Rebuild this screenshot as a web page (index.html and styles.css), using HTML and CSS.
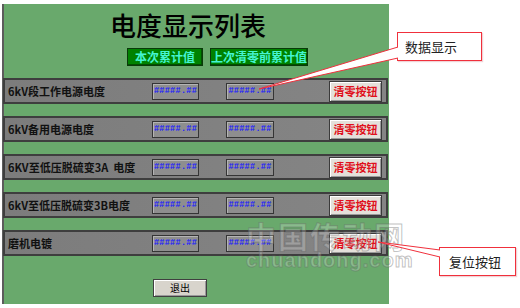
FILE: index.html
```html
<!DOCTYPE html>
<html lang="zh-CN">
<head>
    <meta charset="UTF-8">
    <title>电度显示列表</title>
    <link rel="stylesheet" href="styles.css">
</head>
<body>

    <div class="screen">
        <h1 class="title">电度显示列表</h1>

        <div class="heads">
            <span class="head head-now">本次累计值</span>
            <span class="head head-last">上次清零前累计值</span>
        </div>

        <ul class="rows">
            <li class="row">
                <span class="name">6kV段工作电源电度</span>
                <span class="val">#####.##</span>
                <span class="val val-last">#####.##</span>
                <button class="clear">清零按钮</button>
            </li>
            <li class="row">
                <span class="name">6kV备用电源电度</span>
                <span class="val">#####.##</span>
                <span class="val val-last">#####.##</span>
                <button class="clear">清零按钮</button>
            </li>
            <li class="row">
                <span class="name">6KV至低压脱硫变3A&nbsp;&nbsp;电度</span>
                <span class="val">#####.##</span>
                <span class="val val-last">#####.##</span>
                <button class="clear">清零按钮</button>
            </li>
            <li class="row">
                <span class="name">6kV至低压脱硫变3B电度</span>
                <span class="val">#####.##</span>
                <span class="val val-last">#####.##</span>
                <button class="clear">清零按钮</button>
            </li>
            <li class="row">
                <span class="name">磨机电镀</span>
                <span class="val">#####.##</span>
                <span class="val val-last">#####.##</span>
                <button class="clear">清零按钮</button>
            </li>
        </ul>

        <button class="exit">退出</button>
    </div>

    <!-- watermark over the lower rows -->
    <div class="watermark">
        <div class="wm-cn">中国传动网</div>
        <div class="wm-en">chuandong.com</div>
    </div>

    <!-- annotations -->
    <div class="callout callout-data">数据显示</div>
    <div class="callout callout-reset">复位按钮</div>
    <svg class="pointers" width="520" height="308" viewBox="0 0 520 308">
        <polygon points="398,47 259,89 398,58" fill="#fff"/>
        <polyline points="398,47 259,89 398,58" fill="none" stroke="#f0303c" stroke-width="1"/>
        <polygon points="440,250 378,242 440,257" fill="#fff"/>
        <polyline points="440,250 378,242 440,257" fill="none" stroke="#f0303c" stroke-width="1"/>
    </svg>

</body>
</html>
```

FILE: styles.css
```css
body {
    margin: 0;
    width: 520px;
    height: 308px;
    overflow: hidden;
    position: relative;
    background-color: #ffffff;
    font-family: "Noto Sans CJK SC", "Liberation Sans", sans-serif;
}

.screen {
    margin: 4px 0 0 2px;
    width: 385px;
    height: 300px;
    background-color: #69a96c;
    border-left: 2px solid #5c5c5c;
    display: flex;
    flex-direction: column;
}

.title {
    margin: 6px 0 0 0;
    padding-left: 106px;
    font-size: 26px;
    line-height: 30px;
    font-weight: 500;
    color: #000000;
}

.heads {
    display: flex;
    gap: 7px;
    margin-top: 8px;
    padding-left: 123px;
}

.head {
    box-sizing: border-box;
    height: 18px;
    background-color: #008200;
    border: 1px solid #0a3a0a;
    box-shadow: inset -1px -1px 0 #005000;
    color: #45f5d2;
    font-size: 12px;
    font-weight: bold;
    line-height: 16px;
    text-align: center;
}

.head-now {
    width: 76px;
}

.head-last {
    width: 98px;
}

.rows {
    list-style: none;
    margin: 12px 0 0 -1px;
    padding: 0;
    display: flex;
    flex-direction: column;
    gap: 12px;
}

.row {
    box-sizing: border-box;
    width: 385px;
    height: 26px;
    display: flex;
    align-items: center;
    background: linear-gradient(to right, #7c7c7c, #858585);
    border: 2px solid #3e3e3e;
}

.name {
    width: 144px;
    padding-left: 3px;
    font-size: 11px;
    font-weight: bold;
    color: #111111;
    white-space: nowrap;
}

.val {
    box-sizing: border-box;
    width: 47px;
    height: 17px;
    background-color: #8e8e8e;
    border: 1px solid #353535;
    box-shadow: inset 1px 1px 0 #b4b4b4;
    color: #1c1cff;
    font-family: "Liberation Mono", monospace;
    font-size: 8.5px;
    font-weight: bold;
    line-height: 15px;
    letter-spacing: 0.3px;
    text-align: center;
}

.val-last {
    width: 48px;
    margin-left: 27px;
}

.clear {
    box-sizing: border-box;
    width: 53px;
    height: 21px;
    margin-left: 55px;
    padding: 0;
    background-color: #e4e0da;
    border: 1px solid #3a3a3a;
    box-shadow: inset 1px 1px 0 #ffffff, inset -1px -1px 0 #9a9a9a;
    color: #e0101c;
    font-family: "Noto Sans CJK SC", sans-serif;
    font-size: 11px;
    font-weight: bold;
    line-height: 19px;
}

.exit {
    box-sizing: border-box;
    width: 54px;
    height: 18px;
    margin: 23px 0 0 149px;
    padding: 0;
    background-color: #d8d4cc;
    border: 1px solid #404040;
    box-shadow: inset 1px 1px 0 #ffffff, inset -1px -1px 0 #999999;
    color: #000000;
    font-family: "Noto Sans CJK SC", sans-serif;
    font-size: 10px;
    line-height: 16px;
}

.watermark {
    position: absolute;
    left: 246px;
    top: 218px;
    pointer-events: none;
    color: rgba(255, 255, 255, 0.22);
    -webkit-text-stroke: 1px rgba(100, 100, 100, 0.4);
    font-weight: bold;
}

.wm-cn {
    font-size: 30px;
    line-height: 34px;
    letter-spacing: 2px;
}

.wm-en {
    font-family: "Liberation Sans", sans-serif;
    font-size: 20px;
    line-height: 16px;
    letter-spacing: 1px;
}

.callout {
    position: absolute;
    box-sizing: border-box;
    height: 29px;
    background-color: #ffffff;
    border: 1px solid #f0303c;
    box-shadow: 1px 1px 1px rgba(200, 80, 90, 0.25);
    color: #222222;
    font-size: 13px;
    line-height: 27px;
}

.callout-data {
    left: 397px;
    top: 32px;
    width: 85px;
    padding-left: 7px;
}

.callout-reset {
    left: 439px;
    top: 247px;
    width: 77px;
    padding-left: 9px;
}

.pointers {
    position: absolute;
    left: 0;
    top: 0;
    pointer-events: none;
}
```
